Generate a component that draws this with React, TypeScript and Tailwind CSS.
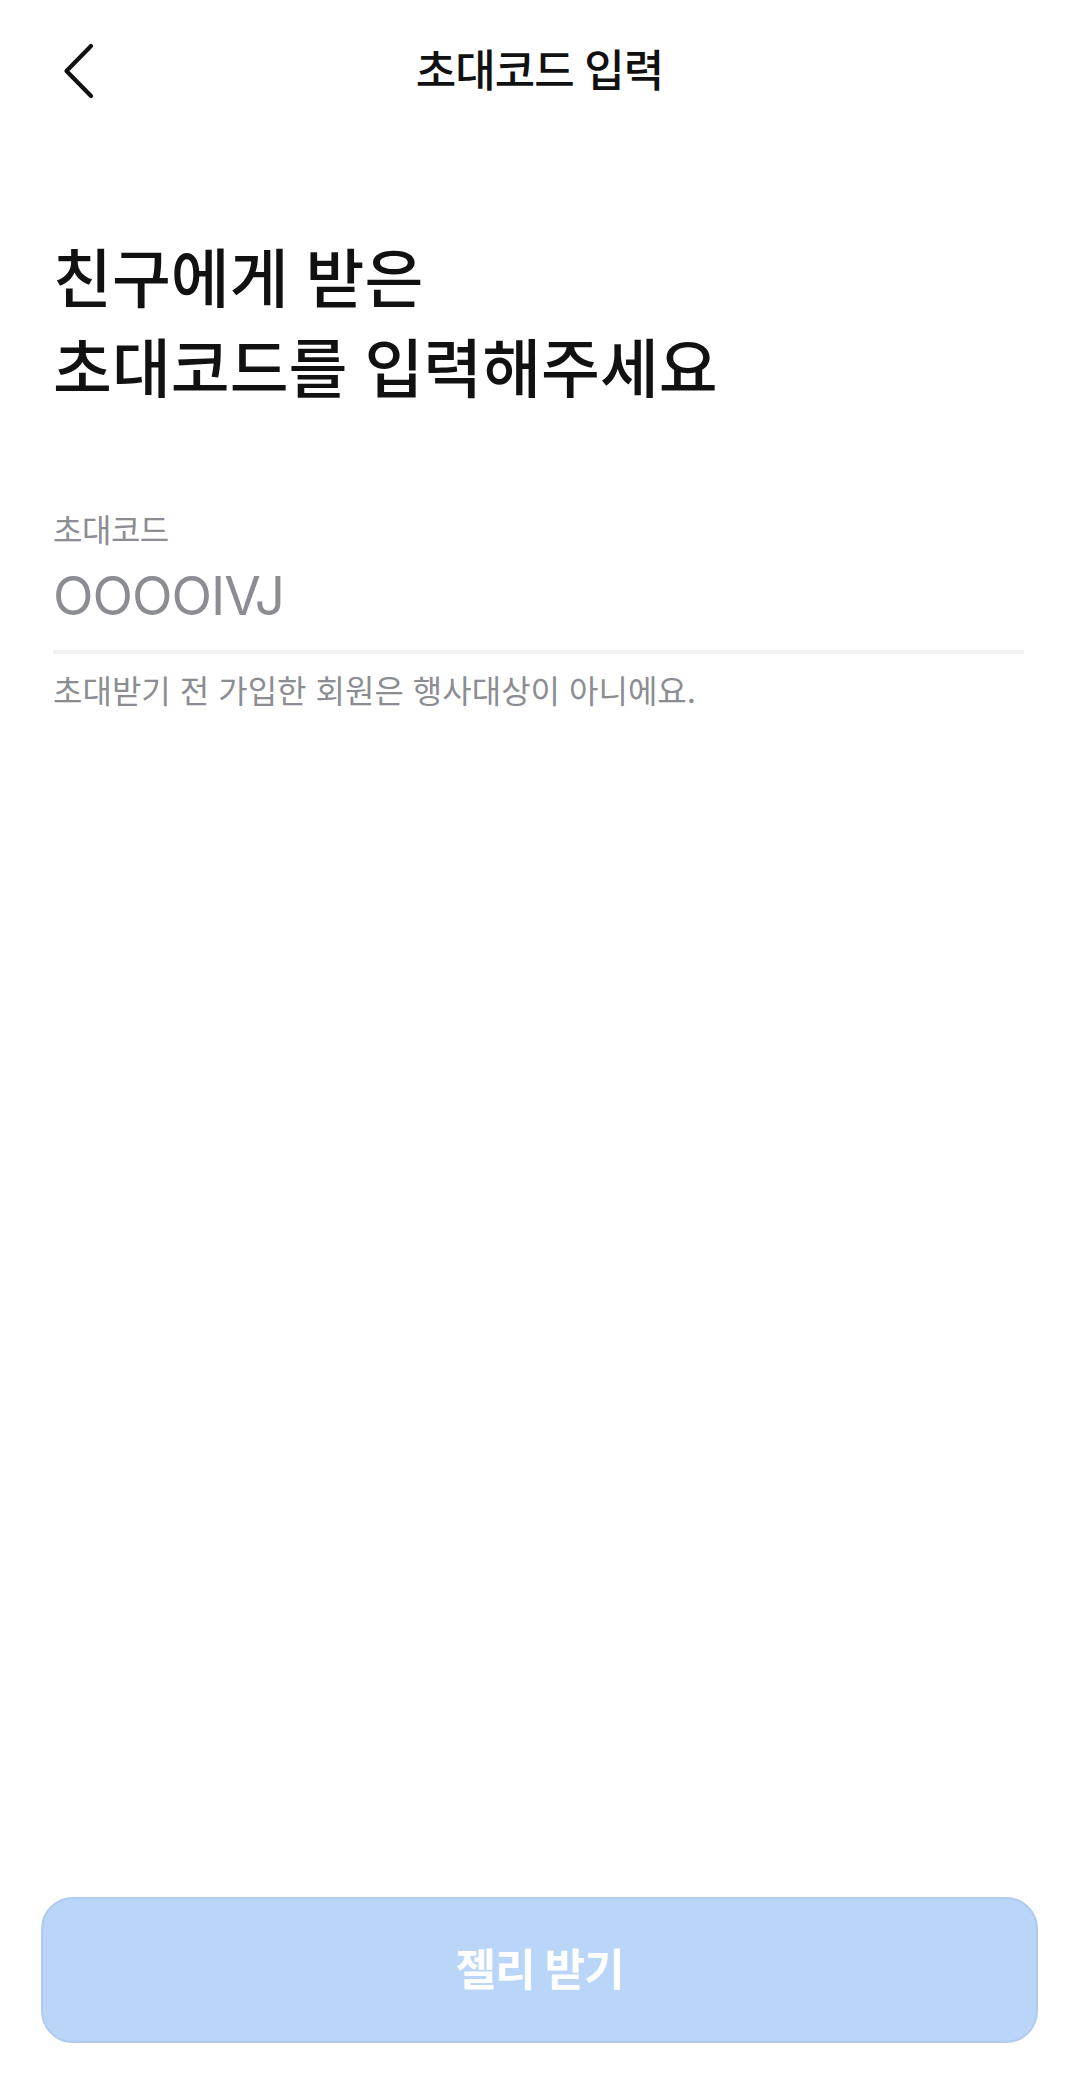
import React from "react";

export default function App() {
  return (
    <div
      className="relative w-[1079px] h-[2078px] bg-white overflow-hidden flex flex-col"
      style={{ fontFamily: '"Inter", "Noto Sans CJK KR", sans-serif' }}
    >
      <header className="relative h-[142px] flex items-center justify-center shrink-0">
        <button className="absolute left-[40px] top-[26px] w-[80px] h-[90px]">
          <svg width="80" height="90" viewBox="0 0 80 90" fill="none">
            <path
              d="M51 20 L26.5 45 L51 70"
              stroke="#111111"
              strokeWidth="4.2"
              strokeLinecap="round"
              strokeLinejoin="round"
            />
          </svg>
        </button>
        <h1 className="text-[44px] font-medium tracking-[-1px] text-[#111111] leading-none">
          초대코드 입력
        </h1>
      </header>
      <div className="px-[53px] flex flex-col flex-1">
        <h2 className="mt-[92px] text-[64px] leading-[90px] font-medium tracking-[0px] text-[#111111]">
          친구에게 받은
          <br />
          초대코드를 입력해주세요
        </h2>
        <div className="mt-[97px] text-[32px] leading-[40px] text-[#8b8d93] tracking-[-0.5px]">초대코드</div>
        <div className="mt-[13px] text-[53px] leading-[64px] text-[#8b8d93] tracking-[-1px]">OOOOIVJ</div>
        <div className="mt-[22px] h-[4px] bg-[#f1f1f3] mr-[2px]" />
        <div className="mt-[18px] text-[32px] leading-[40px] text-[#8b8d93] tracking-[0px]">
          초대받기 전 가입한 회원은 행사대상이 아니에요.
        </div>
        <div className="flex-1" />
      </div>
      <div className="px-[41px] pb-[35px]">
        <button className="w-full h-[146px] rounded-[32px] bg-[#b9d5f7] border-2 border-[#b0cbee] flex items-center justify-center">
          <span className="text-[44px] font-semibold text-white tracking-[-1px]">젤리 받기</span>
        </button>
      </div>
    </div>
  );
}
